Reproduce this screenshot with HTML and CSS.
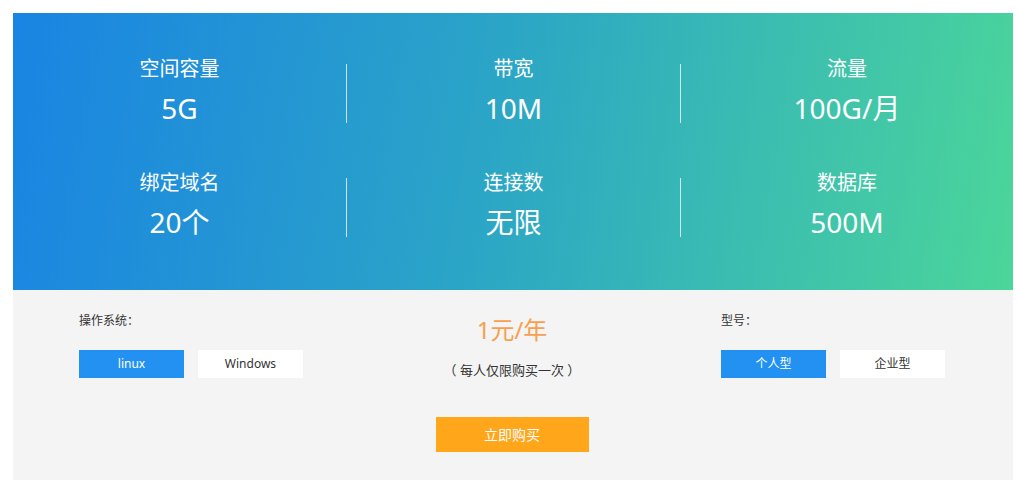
FILE: index.html
```html
<!DOCTYPE html>
<html lang="zh-CN">
<head>
<meta charset="utf-8">
<title>主机套餐</title>
<link rel="stylesheet" href="styles.css">
</head>
<body>
<div class="wrap">
  <section class="specs">
    <div class="spec"><div class="label">空间容量</div><div class="value">5G</div></div>
    <div class="spec"><div class="label">带宽</div><div class="value">10M</div></div>
    <div class="spec"><div class="label">流量</div><div class="value">100G/月</div></div>
    <div class="spec"><div class="label">绑定域名</div><div class="value">20个</div></div>
    <div class="spec"><div class="label">连接数</div><div class="value">无限</div></div>
    <div class="spec"><div class="label">数据库</div><div class="value">500M</div></div>
  </section>
  <section class="order">
    <div class="opt opt-left">
      <div class="opt-title">操作系统：</div>
      <div class="btns">
        <span class="btn active">linux</span>
        <span class="btn">Windows</span>
      </div>
    </div>
    <div class="mid">
      <div class="price">1元/年</div>
      <div class="note">（ 每人仅限购买一次 ）</div>
      <a class="buy">立即购买</a>
    </div>
    <div class="opt opt-right">
      <div class="opt-title">型号：</div>
      <div class="btns">
        <span class="btn active">个人型</span>
        <span class="btn">企业型</span>
      </div>
    </div>
  </section>
</div>
</body>
</html>
```
FILE: styles.css
```css
html, body {
  margin: 0;
  padding: 0;
  background: #fff;
}
body {
  font-family: "Noto Sans", "Noto Sans CJK SC", sans-serif;
}
.wrap {
  width: 1000px;
  margin: 13px 0 0 13px;
}
.specs {
  height: 277px;
  box-sizing: border-box;
  padding: 51px 0 0;
  background: linear-gradient(100deg, #1a84e3 0%, #2aa3c8 45%, #4bd69a 100%);
  display: grid;
  grid-template-columns: 333px 334px 333px;
  grid-auto-rows: 59px;
  row-gap: 55px;
  color: #fff;
}
.spec {
  display: flex;
  flex-direction: column;
  align-items: center;
  justify-content: flex-start;
  border-left: 1px solid rgba(255,255,255,0.75);
}
.spec:nth-child(3n+1) {
  border-left: none;
}
.label {
  font-size: 20px;
  line-height: 26px;
  margin-top: -8px;
}
.value {
  font-size: 28px;
  line-height: 36px;
  margin-top: 8px;
}
.order {
  height: 190px;
  background: #f4f4f4;
  display: grid;
  grid-template-columns: 333px 332px 335px;
}
.opt {
  padding-top: 23px;
}
.opt-left {
  padding-left: 66px;
}
.opt-right {
  padding-left: 43px;
}
.opt-title {
  font-size: 12px;
  line-height: 16px;
  color: #333;
}
.btns {
  display: flex;
  gap: 14px;
  margin-top: 21px;
}
.btn {
  width: 105px;
  height: 28px;
  line-height: 28px;
  text-align: center;
  font-size: 12px;
  background: #fff;
  color: #333;
}
.btn.active {
  background: #2291f2;
  color: #fff;
}
.mid {
  display: flex;
  flex-direction: column;
  align-items: center;
  padding-top: 25px;
}
.price {
  font-size: 24px;
  line-height: 30px;
  color: #f7a04f;
}
.note {
  font-size: 13px;
  line-height: 18px;
  color: #333;
  margin-top: 16px;
}
.buy {
  display: block;
  width: 153px;
  height: 35px;
  line-height: 35px;
  text-align: center;
  font-size: 14px;
  color: #fff;
  background: #ffa61a;
  margin-top: 38px;
}
```
